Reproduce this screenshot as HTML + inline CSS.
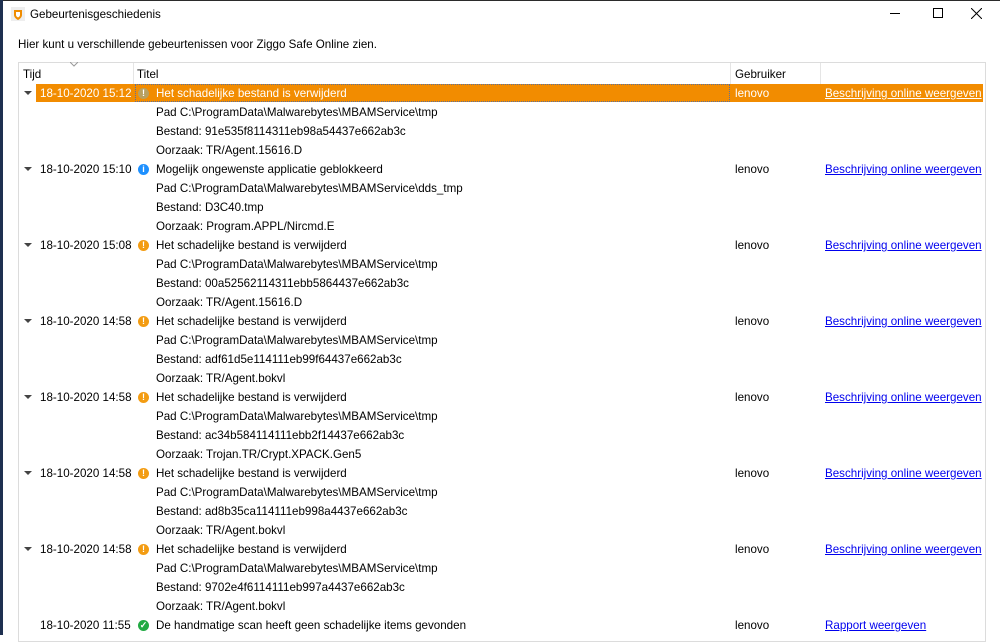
<!DOCTYPE html>
<html><head><meta charset="utf-8"><style>
*{margin:0;padding:0;box-sizing:border-box}
body{width:1000px;height:635px;overflow:hidden;background:#fff;font-family:"Segoe UI","Liberation Sans",sans-serif;font-size:11.6px;color:#000;position:relative}
.a{position:absolute;white-space:nowrap;line-height:19px}
.lk{color:#0000ee;text-decoration:underline}
.ic{position:absolute;width:11px;height:11px;border-radius:50%;color:#fff;font-size:9px;font-weight:bold;line-height:11px;text-align:center}
.tri{position:absolute;width:0;height:0;border-left:4px solid transparent;border-right:4px solid transparent;border-top:4px solid #444}
</style></head><body>
<div style="position:absolute;left:0;top:0;width:1000px;height:1px;background:#2b2b2b"></div>
<div style="position:absolute;left:0;top:0;width:3px;height:635px;background:#1e3050"></div>
<svg class="a" style="left:11px;top:7px" width="14" height="14"><rect x="0" y="0" width="14" height="14" fill="#eee"/><path d="M3 3h8v5c0 2-2 4-4 5c-2-1-4-3-4-5z" fill="#f08c00"/><path d="M5 5h4v3c0 1-1 2-2 2.5c-1-.5-2-1.5-2-2.5z" fill="#fff"/></svg>
<div class="a" style="left:30px;top:5px">Gebeurtenisgeschiedenis</div>
<div class="a" style="left:890px;top:13px;width:10px;height:1px;background:#000"></div>
<div class="a" style="left:933px;top:8px;width:10px;height:10px;border:1px solid #000"></div>
<svg class="a" style="left:971px;top:8px" width="11" height="11"><path d="M0 0L11 11M11 0L0 11" stroke="#000" stroke-width="1"/></svg>
<div class="a" style="left:18px;top:35px">Hier kunt u verschillende gebeurtenissen voor Ziggo Safe Online zien.</div>
<div style="position:absolute;left:18px;top:62px;width:968px;height:580px;border:1px solid #dcdcdc"></div>
<div style="position:absolute;left:133px;top:63px;width:1px;height:21px;background:#e5e5e5"></div>
<div style="position:absolute;left:730px;top:63px;width:1px;height:21px;background:#e5e5e5"></div>
<div style="position:absolute;left:820px;top:63px;width:1px;height:21px;background:#e5e5e5"></div>
<svg class="a" style="left:70px;top:62px" width="8" height="5"><path d="M0 0L4 4L8 0" stroke="#999" fill="none"/></svg>
<div class="a" style="left:23px;top:65px">Tijd</div>
<div class="a" style="left:137px;top:65px">Titel</div>
<div class="a" style="left:735px;top:65px">Gebruiker</div>
<div style="position:absolute;left:36px;top:84px;width:947px;height:18px;background:#f28c00"></div>
<div style="position:absolute;left:135px;top:84px;width:595px;height:18px;border:1px dotted #5a6f9e"></div>
<div id="rows"></div>
<script>
var ev=[
["15:12","o","Het schadelijke bestand is verwijderd",["Pad C:\\ProgramData\\Malwarebytes\\MBAMService\\tmp","Bestand: 91e535f8114311eb98a54437e662ab3c","Oorzaak: TR/Agent.15616.D"],1],
["15:10","i","Mogelijk ongewenste applicatie geblokkeerd",["Pad C:\\ProgramData\\Malwarebytes\\MBAMService\\dds_tmp","Bestand: D3C40.tmp","Oorzaak: Program.APPL/Nircmd.E"],1],
["15:08","o","Het schadelijke bestand is verwijderd",["Pad C:\\ProgramData\\Malwarebytes\\MBAMService\\tmp","Bestand: 00a52562114311ebb5864437e662ab3c","Oorzaak: TR/Agent.15616.D"],1],
["14:58","o","Het schadelijke bestand is verwijderd",["Pad C:\\ProgramData\\Malwarebytes\\MBAMService\\tmp","Bestand: adf61d5e114111eb99f64437e662ab3c","Oorzaak: TR/Agent.bokvl"],1],
["14:58","o","Het schadelijke bestand is verwijderd",["Pad C:\\ProgramData\\Malwarebytes\\MBAMService\\tmp","Bestand: ac34b584114111ebb2f14437e662ab3c","Oorzaak: Trojan.TR/Crypt.XPACK.Gen5"],1],
["14:58","o","Het schadelijke bestand is verwijderd",["Pad C:\\ProgramData\\Malwarebytes\\MBAMService\\tmp","Bestand: ad8b35ca114111eb998a4437e662ab3c","Oorzaak: TR/Agent.bokvl"],1],
["14:58","o","Het schadelijke bestand is verwijderd",["Pad C:\\ProgramData\\Malwarebytes\\MBAMService\\tmp","Bestand: 9702e4f6114111eb997a4437e662ab3c","Oorzaak: TR/Agent.bokvl"],1],
["11:55","g","De handmatige scan heeft geen schadelijke items gevonden",[],0]];
var h="",y=84;
ev.forEach(function(e,k){
 var sel=k==0,c=sel?"#fff":"#000";
 if(e[4])h+='<div class="tri" style="left:24px;top:'+(y+7)+'px"></div>';
 h+='<div class="a" style="left:40px;top:'+y+'px;color:'+c+'">18-10-2020 '+e[0]+'</div>';
 var col=e[1]=="i"?"#1e90ff":e[1]=="g"?"#22aa44":(sel?"#b8a060":"#f39c12"),t=e[1]=="i"?"i":e[1]=="g"?"✓":"!";
 h+='<div class="ic" style="left:138px;top:'+(y+4)+'px;background:'+col+'">'+t+'</div>';
 h+='<div class="a" style="left:156px;top:'+y+'px;color:'+c+'">'+e[2]+'</div>';
 h+='<div class="a" style="left:735px;top:'+y+'px;color:'+c+'">lenovo</div>';
 h+='<div class="a lk" style="left:825px;top:'+y+'px;'+(sel?'color:#fff':'')+'">'+(e[4]?'Beschrijving online weergeven':'Rapport weergeven')+'</div>';
 y+=19;
 e[3].forEach(function(s){h+='<div class="a" style="left:156px;top:'+y+'px">'+s+'</div>';y+=19;});
});
document.getElementById("rows").innerHTML=h;
</script>
</body></html>
